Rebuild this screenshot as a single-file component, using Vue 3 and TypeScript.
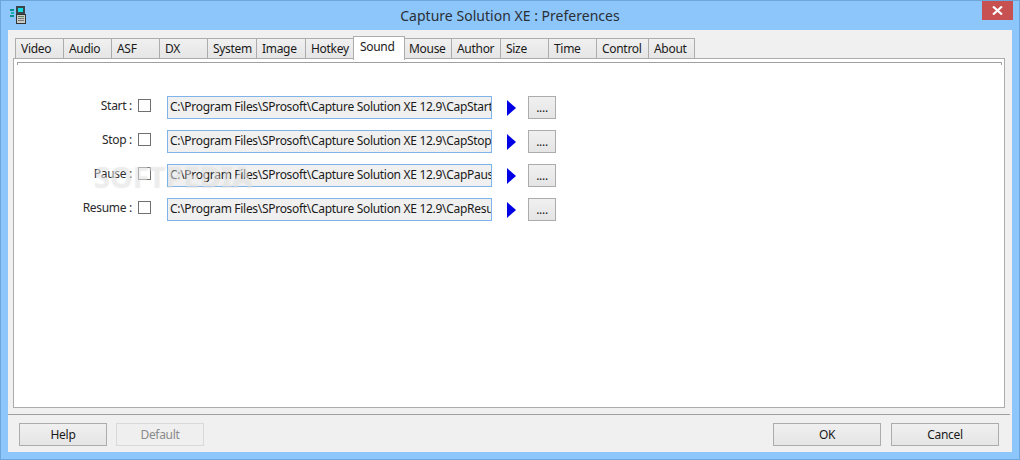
<script setup lang="ts">
interface Tab { name: string; width: number; active?: boolean }
const tabs: Tab[] = [
  { name: 'Video', width: 48 }, { name: 'Audio', width: 48 }, { name: 'ASF', width: 48 },
  { name: 'DX', width: 48 }, { name: 'System', width: 49 }, { name: 'Image', width: 49 },
  { name: 'Hotkey', width: 50 }, { name: 'Sound', width: 52, active: true }, { name: 'Mouse', width: 48 },
  { name: 'Author', width: 49 }, { name: 'Size', width: 48 }, { name: 'Time', width: 48 },
  { name: 'Control', width: 52 }, { name: 'About', width: 46 }
]
const rows = [
  { label: 'Start :', file: 'CapStart.wav' },
  { label: 'Stop :', file: 'CapStop.wav' },
  { label: 'Pause :', file: 'CapPause.wav' },
  { label: 'Resume :', file: 'CapResume.wav' }
]
const base = 'C:\\Program Files\\SProsoft\\Capture Solution XE 12.9\\'
</script>

<template>
  <div class="window">
    <header class="titlebar">
      <svg class="app-icon" width="18" height="19" viewBox="0 0 18 19">
        <rect x="0" y="3" width="4" height="2" fill="#0a8f8f" />
        <rect x="1" y="6" width="3" height="2" fill="#12b5b5" />
        <rect x="0" y="9" width="4" height="2" fill="#0a8f8f" />
        <rect x="6" y="0" width="9" height="8" fill="#3a464c" />
        <rect x="8" y="2" width="5" height="4" fill="#10dfe6" />
        <rect x="6.5" y="8.5" width="9" height="9" fill="#c9ccc6" stroke="#333" stroke-width="1" />
        <rect x="8" y="10" width="6" height="1" fill="#5f7f5f" />
        <rect x="8" y="12" width="6" height="1" fill="#777" />
        <rect x="8" y="14" width="6" height="1" fill="#777" />
      </svg>
      <span class="title">Capture Solution XE : Preferences</span>
      <button class="close" type="button">
        <svg width="11" height="9" viewBox="0 0 11 9"><path d="M1 0.5 L10 8.5 M10 0.5 L1 8.5" stroke="#fff" stroke-width="2.2" /></svg>
      </button>
    </header>

    <main class="client">
      <nav class="tabs">
        <div
          v-for="t in tabs"
          :key="t.name"
          class="tab"
          :class="{ active: t.active }"
          :style="{ width: t.width + (t.active ? 0 : 1) + 'px' }"
        >{{ t.name }}</div>
      </nav>

      <section class="panel">
        <div class="group-edge"></div>
        <div class="rows">
          <div v-for="r in rows" :key="r.label" class="row">
            <span class="label">{{ r.label }}</span>
            <span class="check"></span>
            <div class="path"><span>{{ base + r.file }}</span></div>
            <svg class="play" width="9" height="16" viewBox="0 0 9 16"><path d="M0 0 L9 8 L0 16 Z" fill="#0000e6" /></svg>
            <button class="btn browse" type="button">....</button>
          </div>
        </div>
        <div class="watermark">SOFTPEDIA</div>
      </section>

      <footer class="footer">
        <button class="btn wide" type="button">Help</button>
        <button class="btn wide disabled" type="button">Default</button>
        <span class="spacer"></span>
        <button class="btn wide" type="button">OK</button>
        <button class="btn wide" type="button">Cancel</button>
      </footer>
    </main>
  </div>
</template>

<style>
html, body { margin: 0; background: #8cc6fb; }
</style>

<style scoped>
.window {
  width: 1020px;
  height: 460px;
  box-sizing: border-box;
  border: 1px solid #6ca6dc;
  background: #8cc6fb;
  padding: 0 7px 6px 7px;
  display: flex;
  flex-direction: column;
  font-family: "Noto Sans", sans-serif;
  font-size: 12px;
  letter-spacing: -0.3px;
  color: #1a1a1a;
}
.titlebar {
  height: 29px;
  flex: none;
  display: grid;
  grid-template-columns: 1fr auto 1fr;
}
.app-icon { margin: 5px 0 0 2px; }
.title {
  font-size: 14px;
  line-height: 29px;
  color: #2a2f36;
  letter-spacing: 0.02px;
}
.close {
  justify-self: end;
  width: 31px;
  height: 19px;
  margin: 0 -1px 0 0;
  padding: 0;
  border: 0;
  background: #c75050;
  display: flex;
  align-items: center;
  justify-content: center;
}
.client {
  flex: none;
  height: 422px;
  box-sizing: border-box;
  background: #f0f0f0;
  display: flex;
  flex-direction: column;
  padding-top: 6px;
}
.tabs {
  display: flex;
  align-items: flex-end;
  height: 23px;
  padding-left: 7px;
  flex: none;
}
.tab {
  box-sizing: border-box;
  height: 21px;
  margin-right: -1px;
  padding-left: 5px;
  border: 1px solid #acacac;
  border-bottom: 0;
  background: linear-gradient(#f0f0f0, #e5e5e5);
  line-height: 20px;
  white-space: nowrap;
}
.tab.active {
  position: relative;
  z-index: 2;
  height: 24px;
  margin: 0 -2px -1px -2px;
  padding-left: 6px;
  background: #fff;
  line-height: 20px;
}
.panel {
  position: relative;
  box-sizing: border-box;
  flex: none;
  width: 992px;
  height: 350px;
  margin: -1px 0 0 5px;
  padding: 3px 2px 0 3px;
  border: 1px solid #acacac;
  background: #fff;
}
.group-edge {
  height: 3px;
  box-sizing: border-box;
  border: 1px solid #a0a0a0;
  border-bottom: 0;
}
.rows {
  margin-top: 31px;
  display: flex;
  flex-direction: column;
  gap: 10px;
}
.row {
  display: flex;
  align-items: center;
  height: 24px;
}
.label {
  width: 115px;
  text-align: right;
  margin-top: -5px;
  color: #2a2a2a;
}
.check {
  box-sizing: border-box;
  width: 13px;
  height: 13px;
  margin: -5px 0 0 6px;
  border: 1px solid #707070;
  background: #fff;
}
.path {
  box-sizing: border-box;
  width: 325px;
  height: 23px;
  margin: -1px 0 0 16px;
  padding: 0 0 0 2px;
  border: 1px solid #7eb4ea;
  background: #f0f0f0;
  line-height: 19px;
  white-space: nowrap;
  overflow: hidden;
}
.play { margin-left: 15px; flex: none; }
.btn {
  box-sizing: border-box;
  height: 23px;
  padding: 0;
  border: 1px solid #acacac;
  background: linear-gradient(#f0f0f0, #e5e5e5);
  font: inherit;
  letter-spacing: inherit;
  color: #1a1a1a;
}
.browse { width: 28px; margin: -1px 0 0 12px; line-height: 21px; }
.watermark {
  position: absolute;
  left: 80px;
  top: 98px;
  font-size: 29px;
  font-weight: 700;
  letter-spacing: 0;
  color: rgba(255, 255, 255, 0.5);
  text-shadow: 0 0 1px rgba(0, 0, 0, 0.14);
  pointer-events: none;
}
.footer {
  flex: none;
  display: flex;
  gap: 10px;
  margin: 6px 2px 0 0;
  padding: 8px 11px 0 11px;
  border-top: 1px solid #a0a0a0;
}
.wide { width: 108px; }
.footer .wide:nth-child(-n+2) { width: 88px; }
.footer .wide:nth-child(2) { margin-left: -1px; }
.disabled { border-color: #d9d9d9; background: #efefef; color: #8a8a8a; }
.spacer { flex: 1; }
</style>
